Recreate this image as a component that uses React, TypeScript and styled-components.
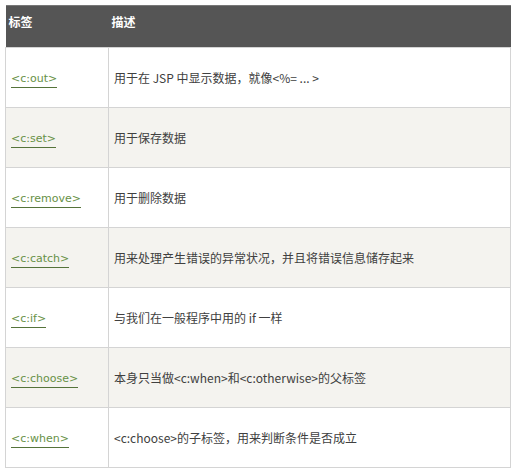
import React from "react";
import styled, { createGlobalStyle } from "styled-components";

const Global = createGlobalStyle`
  html, body { margin: 0; padding: 0; background: #ffffff; }
  body { font-family: "Noto Sans CJK SC", "DejaVu Sans", sans-serif; }
`;

const Page = styled.div`
  padding: 5px 3px 0 5px;
`;

const Table = styled.table`
  width: 506px;
  border-collapse: collapse;
  table-layout: fixed;
  font-size: 12px;
  color: #333333;
`;

const HeadRow = styled.tr`
  background: #555555;
  height: 42px;
`;

const Th = styled.th<{ $w?: number }>`
  ${(p) => (p.$w ? `width: ${p.$w}px;` : "")}
  text-align: left;
  vertical-align: top;
  padding: 7px 3px 0 3px;
  color: #ffffff;
  font-weight: bold;
  font-size: 12px;
  border-top: 1px solid #777777;
`;

const Row = styled.tr<{ $alt: boolean }>`
  height: 60px;
  background: ${(p) => (p.$alt ? "#f4f3ef" : "#ffffff")};
`;

const Td = styled.td`
  border: 1px solid #d4d4d4;
  padding: 0 5px;
  vertical-align: middle;
  line-height: 18px;
`;

const TagLink = styled.a`
  font-family: "DejaVu Sans", "Noto Sans CJK SC", sans-serif;
  font-size: 11px;
  color: #679146;
  text-decoration: none;
  border-bottom: 1px solid #55733a;
  padding-bottom: 2px;
`;

const Desc = styled.span`
  font-size: 12px;
  color: #404040;
`;

const rows: [string, string][] = [
  ["<c:out>", "用于在 JSP 中显示数据，就像<%= ... >"],
  ["<c:set>", "用于保存数据"],
  ["<c:remove>", "用于删除数据"],
  ["<c:catch>", "用来处理产生错误的异常状况，并且将错误信息储存起来"],
  ["<c:if>", "与我们在一般程序中用的 if 一样"],
  ["<c:choose>", "本身只当做<c:when>和<c:otherwise>的父标签"],
  ["<c:when>", "<c:choose>的子标签，用来判断条件是否成立"],
];

export default function App() {
  return (
    <>
      <Global />
      <Page>
        <Table>
          <thead>
            <HeadRow>
              <Th $w={97}>标签</Th>
              <Th>描述</Th>
            </HeadRow>
          </thead>
          <tbody>
            {rows.map(([tag, desc], i) => (
              <Row key={tag} $alt={i % 2 === 1}>
                <Td>
                  <TagLink href="#">{tag}</TagLink>
                </Td>
                <Td>
                  <Desc>{desc}</Desc>
                </Td>
              </Row>
            ))}
          </tbody>
        </Table>
      </Page>
    </>
  );
}
